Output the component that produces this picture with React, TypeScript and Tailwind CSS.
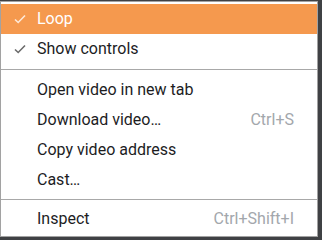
type Item = { label: string; shortcut?: string; checked?: boolean; active?: boolean };

function Check({ className }: { className: string }) {
  return (
    <svg width="12" height="10" viewBox="0 0 12 10" className={className} fill="none">
      <path d="M1 5.5 L4.2 8.5 L11 1.5" stroke="currentColor" strokeWidth="1.6" />
    </svg>
  );
}

function Row({ item }: { item: Item }) {
  return (
    <div
      className={`flex h-[30px] items-center pr-[23px] ${
        item.active ? 'bg-[#f5994e] text-white' : 'text-[#1d1d1f]'
      }`}
    >
      <div className="flex w-[36px] justify-center pl-[2px]">
        {item.checked && <Check className={item.active ? 'text-[#fde9d9]' : 'text-[#6b6b6b]'} />}
      </div>
      <span className="flex-1">{item.label}</span>
      {item.shortcut && <span className="text-[#a3a7ac]">{item.shortcut}</span>}
    </div>
  );
}

export default function App() {
  const top: Item[] = [
    { label: 'Loop', checked: true, active: true },
    { label: 'Show controls', checked: true },
  ];
  const mid: Item[] = [
    { label: 'Open video in new tab' },
    { label: 'Download video…', shortcut: 'Ctrl+S' },
    { label: 'Copy video address' },
    { label: 'Cast…' },
  ];

  return (
    <div className="h-[240px] w-[322px] bg-[#3f4144] pt-[1px] font-['Roboto',sans-serif] text-[16px]">
      <div className="h-[236px] w-[318px] border border-[#a2a2a2] bg-white pt-[2px]">
        {top.map((i) => (
          <Row key={i.label} item={i} />
        ))}
        <div className="my-[5px] h-px bg-[#a8a8a8]" />
        {mid.map((i) => (
          <Row key={i.label} item={i} />
        ))}
        <div className="mb-[4px] mt-[4px] h-px bg-[#a8a8a8]" />
        <Row item={{ label: 'Inspect', shortcut: 'Ctrl+Shift+I' }} />
      </div>
    </div>
  );
}
